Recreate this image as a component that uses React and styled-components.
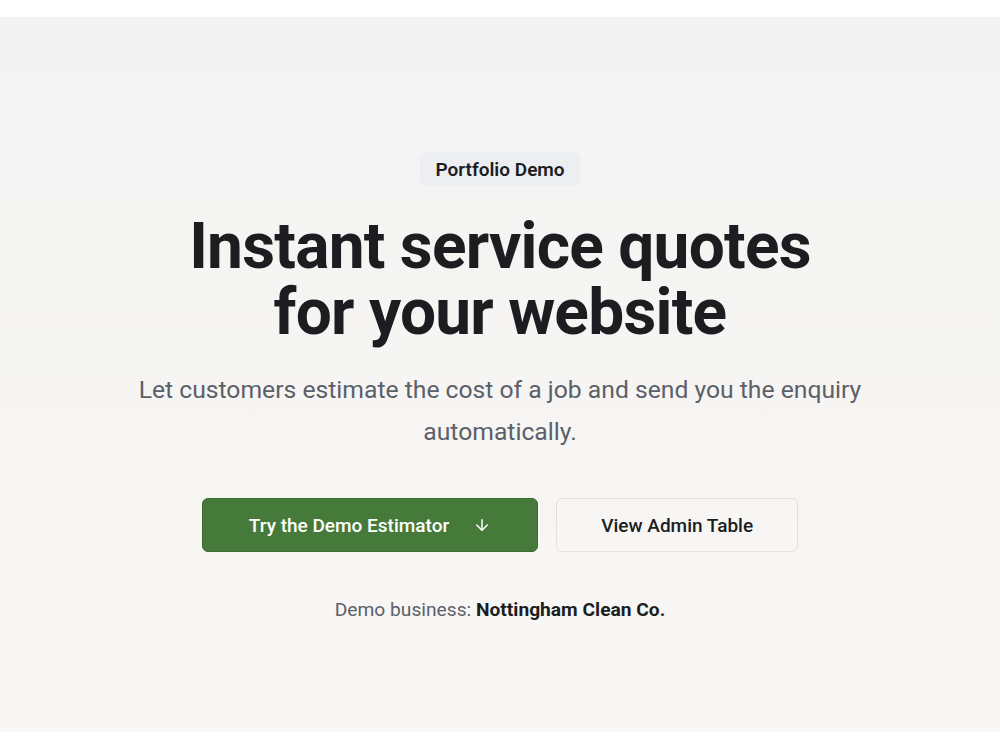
import React from 'react';
import styled, { createGlobalStyle } from 'styled-components';
import { ArrowDown } from 'lucide-react';

const GlobalStyle = createGlobalStyle`
  body {
    margin: 0;
    background: #ffffff;
    font-family: Roboto, "Liberation Sans", Arial, sans-serif;
    color: #1b1d21;
  }
`;

const Hero = styled.section`
  margin: 17px 0 18px;
  min-height: 715px;
  box-sizing: border-box;
  padding-top: 135px;
  display: flex;
  flex-direction: column;
  align-items: center;
  text-align: center;
  background: linear-gradient(180deg, #f3f3f3 0%, #f6f5f3 50%, #f8f7f5 100%);
`;

const Badge = styled.span`
  display: inline-flex;
  align-items: center;
  height: 34px;
  padding: 0 15px;
  border-radius: 7px;
  background: #eceef2;
  font-size: 19px;
  font-weight: 600;
  color: #1b1d21;
`;

const Title = styled.h1`
  margin: 28px 0 0;
  font-size: 64px;
  line-height: 66px;
  font-weight: 700;
  letter-spacing: -0.012em;
  color: #1b1d21;
`;

const Lead = styled.p`
  margin: 23px 0 0;
  max-width: 780px;
  font-size: 24.7px;
  line-height: 42px;
  color: #5b6069;
`;

const Actions = styled.div`
  margin-top: 45px;
  display: flex;
  gap: 18px;
`;

const Button = styled.a`
  display: inline-flex;
  align-items: center;
  justify-content: center;
  gap: ${(p) => (p.$primary ? '24px' : '0')};
  height: 54px;
  box-sizing: border-box;
  padding: 0 ${(p) => (p.$primary ? '46px' : '44px')};
  border-radius: 6px;
  border: 1px solid ${(p) => (p.$primary ? '#3d6b32' : '#e2e1df')};
  background: ${(p) => (p.$primary ? '#467a3a' : '#f7f6f4')};
  color: ${(p) => (p.$primary ? '#ffffff' : '#1b1d21')};
  font-size: 19px;
  font-weight: 500;
  text-decoration: none;
  cursor: pointer;
`;

const Note = styled.p`
  margin: 44px 0 0;
  font-size: 19.2px;
  line-height: 28px;
  color: #5b6069;

  strong {
    font-weight: 700;
    color: #1b1d21;
  }
`;

export default function App() {
  return (
    <>
      <GlobalStyle />
      <Hero>
        <Badge>Portfolio Demo</Badge>
        <Title>
          Instant service quotes
          <br />
          for your website
        </Title>
        <Lead>
          Let customers estimate the cost of a job and send you the enquiry automatically.
        </Lead>
        <Actions>
          <Button $primary href="#estimator">
            Try the Demo Estimator
            <ArrowDown size={18} strokeWidth={2} />
          </Button>
          <Button href="#admin">View Admin Table</Button>
        </Actions>
        <Note>
          Demo business: <strong>Nottingham Clean Co.</strong>
        </Note>
      </Hero>
    </>
  );
}
